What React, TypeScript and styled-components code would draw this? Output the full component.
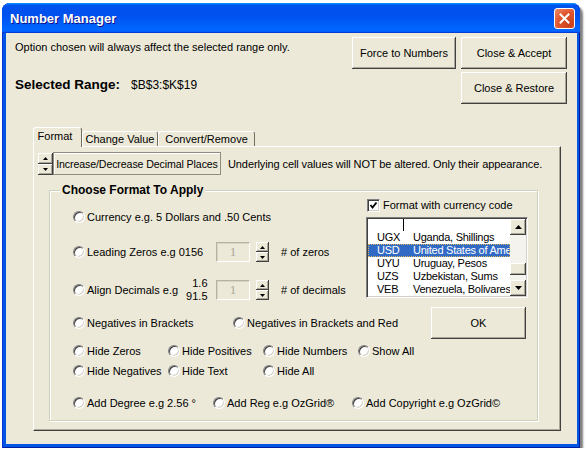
import React from 'react';
import styled, { createGlobalStyle, css } from 'styled-components';

const GlobalStyle = createGlobalStyle`
  html, body { margin: 0; padding: 0; background: #fff; }
  body {
    font-family: "Liberation Sans", Arial, sans-serif;
    font-size: 11px;
    color: #000;
  }
  * { box-sizing: border-box; }
`;

const raised = css`
  background: #ece9d8;
  box-shadow: inset -1px -1px #404040, inset 1px 1px #fff, inset -2px -2px #aca899;
`;

const sunken = css`
  border: 1px solid;
  border-color: #808080 #fff #fff #808080;
  box-shadow: inset 1px 1px #404040, inset -1px -1px #d4d0c8;
`;

const Window = styled.div`
  width: 578px;
  height: 445px;
  margin: 3px 0 0 2px;
  display: flex;
  flex-direction: column;
  background: #0055e5;
  border-radius: 8px 8px 0 0;
  box-shadow: 3px 3px 2px rgba(0, 0, 0, 0.5), inset 1px 0 #0831d9, inset -1px -1px #001ea0;
`;

const TitleBar = styled.div`
  height: 30px;
  flex: none;
  display: flex;
  align-items: center;
  padding: 0 5px 0 8px;
  border-radius: 8px 8px 0 0;
  background: linear-gradient(180deg, #0997ff, #0053ee 8%, #0050ee 40%, #06f 88%, #06f 93%, #005bff 95%, #003dd7 96%, #003dd7);
`;

const Title = styled.div`
  flex: 1;
  color: #fff;
  font-weight: bold;
  font-size: 13px;
  text-shadow: 1px 1px #0f1089;
`;

const CloseBtn = styled.div`
  width: 21px;
  height: 21px;
  border: 1px solid #fff;
  border-radius: 3px;
  display: flex;
  align-items: center;
  justify-content: center;
  background: radial-gradient(circle at 80% 80%, #c8401a, #e0552e 55%, #ef8d6c);
`;

const Body = styled.div`
  flex: 1;
  margin: 0 3px 4px 4px;
  background: #ece9d8;
  padding: 4px 10px 0 9px;
  display: flex;
  flex-direction: column;
`;

const TopGrid = styled.div`
  display: grid;
  grid-template-columns: 1fr 104px 106px;
  grid-template-rows: 32px 32px;
  column-gap: 5px;
  row-gap: 3px;
`;

const InfoCol = styled.div`
  grid-row: 1 / span 2;
  display: flex;
  flex-direction: column;
  padding-top: 3px;
`;

const InfoLine = styled.div`
  line-height: 14px;
  white-space: nowrap;
`;

const RangeLine = styled.div`
  margin-top: 23px;
  line-height: 16px;
  display: flex;
  align-items: baseline;
  white-space: nowrap;
`;

const RangeLabel = styled.span`
  font-weight: bold;
  font-size: 13.5px;
`;

const RangeValue = styled.span`
  font-size: 12px;
  margin-left: 11px;
`;

const Button = styled.div<{ $col?: number; $row?: number }>`
  ${raised};
  display: flex;
  align-items: center;
  justify-content: center;
  white-space: nowrap;
  grid-column: ${p => p.$col ?? 'auto'};
  grid-row: ${p => p.$row ?? 'auto'};
`;

const TabArea = styled.div`
  margin: 23px 0 0 18px;
  width: 528px;
  display: flex;
  flex-direction: column;
`;

const TabStrip = styled.div`
  display: flex;
  align-items: flex-end;
  height: 20px;
  margin-bottom: -1px;
  position: relative;
  z-index: 1;
`;

const Tab = styled.div<{ $active?: boolean; $w: number }>`
  width: ${p => p.$w}px;
  height: ${p => (p.$active ? 20 : 15)}px;
  margin-bottom: ${p => (p.$active ? 0 : 1)}px;
  background: #ece9d8;
  border: 1px solid;
  border-color: #fff #716f64 transparent #fff;
  border-bottom: none;
  border-radius: 3px 3px 0 0;
  display: flex;
  align-items: ${p => (p.$active ? 'flex-start' : 'center')};
  justify-content: center;
  padding: ${p => (p.$active ? '1px 5px 0 0' : '0')};
  white-space: nowrap;
  line-height: 14px;
`;

const Panel = styled.div`
  width: 528px;
  height: 285px;
  border: 1px solid;
  border-color: #fff #404040 #404040 #fff;
  box-shadow: inset -1px -1px #aca899;
  padding: 5px 4px 0 4px;
  display: flex;
  flex-direction: column;
`;

const Toolbar = styled.div`
  display: flex;
  align-items: center;
  height: 23px;
`;

const SpinBox = styled.div<{ $w: number; $h: number }>`
  width: ${p => p.$w}px;
  height: ${p => p.$h}px;
  display: flex;
  flex-direction: column;
  flex: none;
`;

const SpinHalf = styled.div`
  ${raised};
  flex: 1;
  display: flex;
  align-items: center;
  justify-content: center;
`;

const DecimalBtn = styled.div`
  width: 168px;
  height: 23px;
  border: 1px solid #8f8c7e;
  box-shadow: inset 1px 1px #fff;
  display: flex;
  align-items: center;
  justify-content: center;
  white-space: nowrap;
  font-size: 10.6px;
  letter-spacing: -0.1px;
`;

const Note = styled.div`
  margin-left: 7px;
  white-space: nowrap;
  letter-spacing: -0.1px;
`;

const GroupFrame = styled.div`
  position: relative;
  margin: 15px 0 0 11px;
  width: 489px;
  height: 231px;
  border: 1px solid #d0d0bf;
  box-shadow: inset 1px 1px #fff, 1px 1px #fff;
  padding: 7px 9px 0 23px;
  display: flex;
  flex-direction: column;
`;

const Caption = styled.div`
  position: absolute;
  top: -8px;
  left: 10px;
  padding: 0 2px;
  background: #ece9d8;
  font-weight: bold;
  font-size: 12px;
  line-height: 14px;
`;

const TopBlock = styled.div`
  display: grid;
  grid-template-columns: 293px 162px;
`;

const LeftRows = styled.div`
  display: flex;
  flex-direction: column;
  padding-top: 9px;
`;

const FieldRow = styled.div<{ $gap: number }>`
  display: flex;
  align-items: center;
  height: 20px;
  margin-top: ${p => p.$gap}px;
`;

const LabelCell = styled.div`
  width: 143px;
  display: flex;
  align-items: center;
  flex: none;
`;

const Option = styled.div<{ $w?: number }>`
  display: flex;
  align-items: center;
  gap: 2px;
  height: 16px;
  white-space: nowrap;
  width: ${p => (p.$w ? `${p.$w}px` : 'auto')};
  flex: none;
`;

const Radio = styled.span`
  width: 12px;
  height: 12px;
  border-radius: 50%;
  flex: none;
  background: #fff;
  ${sunken};
`;

const NumStack = styled.div`
  display: flex;
  flex-direction: column;
  align-items: flex-end;
  line-height: 13px;
  margin-left: 8px;
`;

const TextBox = styled.div`
  width: 34px;
  height: 20px;
  flex: none;
  border: 1px solid;
  border-color: #b5b2a4 #fff #fff #b5b2a4;
  box-shadow: inset 1px 1px #d8d5c6;
  display: flex;
  align-items: center;
  justify-content: center;
  color: #aca899;
  font-family: "Liberation Serif", "Times New Roman", serif;
  font-size: 13px;
  margin-right: 6px;
`;

const Unit = styled.div`
  margin-left: 12px;
  white-space: nowrap;
`;

const RightCol = styled.div`
  display: flex;
  flex-direction: column;
`;

const CheckRow = styled.div`
  display: flex;
  align-items: center;
  height: 14px;
  gap: 3px;
  padding-left: 1px;
  white-space: nowrap;
`;

const CheckBox = styled.span`
  width: 13px;
  height: 13px;
  background: #fff;
  display: flex;
  align-items: center;
  justify-content: center;
  ${sunken};
`;

const ListBox = styled.div`
  margin-top: 5px;
  width: 162px;
  height: 81px;
  display: flex;
  background: #fff;
  border: 1px solid;
  border-color: #808080 #fff #fff #808080;
  box-shadow: inset 1px 1px #404040, inset -1px -1px #d4d0c8;
  padding: 1px;
`;

const ListBody = styled.div`
  flex: 1;
  min-width: 0;
  overflow: hidden;
`;

const ListHeader = styled.div`
  height: 12px;
  display: flex;
`;

const HeadCell = styled.div`
  width: 36px;
  border-right: 1px solid #000;
`;

const ListRow = styled.div<{ $sel?: boolean }>`
  height: 13px;
  line-height: 13px;
  display: flex;
  white-space: nowrap;
  letter-spacing: -0.25px;
  background: ${p => (p.$sel ? '#316ac5' : 'transparent')};
  color: ${p => (p.$sel ? '#fff' : '#000')};
  outline: ${p => (p.$sel ? '1px dotted #d8b45c' : 'none')};
  outline-offset: -1px;
`;

const CodeCell = styled.span`
  width: 36px;
  padding-left: 9px;
  flex: none;
`;

const NameCell = styled.span`
  padding-left: 9px;
`;

const ScrollBar = styled.div`
  width: 16px;
  flex: none;
  display: flex;
  flex-direction: column;
`;

const ScrollBtn = styled.div<{ $h: number }>`
  ${raised};
  height: ${p => p.$h}px;
  flex: none;
  display: flex;
  align-items: center;
  justify-content: center;
`;

const Track = styled.div`
  flex: 1;
  background: #f4f3ee;
  display: flex;
  flex-direction: column;
  padding-top: 28px;
`;

const Thumb = styled.div`
  ${raised};
  height: 12px;
`;

const NegRow = styled.div`
  display: flex;
  align-items: center;
  height: 32px;
  margin-top: 7px;
`;

const OkButton = styled(Button)`
  width: 95px;
  height: 32px;
  margin-left: auto;
  margin-right: 2px;
`;

const HideGrid = styled.div`
  display: grid;
  grid-template-columns: 95px 95px 95px auto;
  grid-auto-rows: 16px;
  row-gap: 4px;
  margin-top: 4px;
`;

const AddRow = styled.div`
  display: flex;
  margin-top: 16px;
`;

const Arrow = ({ up, w = 5 }: { up?: boolean; w?: number }) => {
  const h = Math.ceil(w / 2);
  const pts = up ? `0,${h} ${w},${h} ${w / 2},0` : `0,0 ${w},0 ${w / 2},${h}`;
  return (
    <svg width={w} height={h} viewBox={`0 0 ${w} ${h}`}>
      <polygon points={pts} fill="#000" />
    </svg>
  );
};

const Spin = ({ w, h }: { w: number; h: number }) => (
  <SpinBox $w={w} $h={h}>
    <SpinHalf><Arrow up w={5} /></SpinHalf>
    <SpinHalf><Arrow w={5} /></SpinHalf>
  </SpinBox>
);

const Opt = ({ label, w }: { label: React.ReactNode; w?: number }) => (
  <Option $w={w}>
    <Radio />
    <span>{label}</span>
  </Option>
);

const currencies = [
  ['UGX', 'Uganda, Shillings'],
  ['USD', 'United States of America, Dollars'],
  ['UYU', 'Uruguay, Pesos'],
  ['UZS', 'Uzbekistan, Sums'],
  ['VEB', 'Venezuela, Bolivares'],
];

export default function App() {
  return (
    <>
      <GlobalStyle />
      <Window>
        <TitleBar>
          <Title>Number Manager</Title>
          <CloseBtn>
            <svg width="11" height="11" viewBox="0 0 11 11">
              <path d="M1.5 1.5 L9.5 9.5 M9.5 1.5 L1.5 9.5" stroke="#fff" strokeWidth="2" strokeLinecap="square" />
            </svg>
          </CloseBtn>
        </TitleBar>
        <Body>
          <TopGrid>
            <InfoCol>
              <InfoLine>Option chosen will always affect the selected range only.</InfoLine>
              <RangeLine>
                <RangeLabel>Selected Range:</RangeLabel>
                <RangeValue>$B$3:$K$19</RangeValue>
              </RangeLine>
            </InfoCol>
            <Button $col={2} $row={1}>Force to Numbers</Button>
            <Button $col={3} $row={1}>Close &amp; Accept</Button>
            <Button $col={3} $row={2}>Close &amp; Restore</Button>
          </TopGrid>

          <TabArea>
            <TabStrip>
              <Tab $active $w={49}>Format</Tab>
              <Tab $w={76}>Change Value</Tab>
              <Tab $w={97}>Convert/Remove</Tab>
            </TabStrip>
            <Panel>
              <Toolbar>
                <Spin w={15} h={22} />
                <DecimalBtn>Increase/Decrease Decimal Places</DecimalBtn>
                <Note>Underlying cell values will NOT be altered. Only their appearance.</Note>
              </Toolbar>

              <GroupFrame>
                <Caption>Choose Format To Apply</Caption>
                <TopBlock>
                  <LeftRows>
                    <FieldRow $gap={0}>
                      <Opt label="Currency e.g. 5 Dollars and .50 Cents" />
                    </FieldRow>
                    <FieldRow $gap={15}>
                      <LabelCell>
                        <Opt label="Leading Zeros e.g 0156" />
                      </LabelCell>
                      <TextBox>1</TextBox>
                      <Spin w={13} h={20} />
                      <Unit># of zeros</Unit>
                    </FieldRow>
                    <FieldRow $gap={18}>
                      <LabelCell>
                        <Opt label="Align Decimals e.g" />
                        <NumStack>
                          <span>1.6</span>
                          <span>91.5</span>
                        </NumStack>
                      </LabelCell>
                      <TextBox>1</TextBox>
                      <Spin w={13} h={20} />
                      <Unit># of decimals</Unit>
                    </FieldRow>
                  </LeftRows>

                  <RightCol>
                    <CheckRow>
                      <CheckBox>
                        <svg width="9" height="9" viewBox="0 0 9 9">
                          <path d="M1.5 4 L3.5 6.5 L7.5 1.5" stroke="#000" strokeWidth="1.8" fill="none" />
                        </svg>
                      </CheckBox>
                      <span>Format with currency code</span>
                    </CheckRow>
                    <ListBox>
                      <ListBody>
                        <ListHeader><HeadCell /></ListHeader>
                        {currencies.map(([code, name]) => (
                          <ListRow key={code} $sel={code === 'USD'}>
                            <CodeCell>{code}</CodeCell>
                            <NameCell>{name}</NameCell>
                          </ListRow>
                        ))}
                      </ListBody>
                      <ScrollBar>
                        <ScrollBtn $h={16}><Arrow up w={7} /></ScrollBtn>
                        <Track><Thumb /></Track>
                        <ScrollBtn $h={16}><Arrow w={7} /></ScrollBtn>
                      </ScrollBar>
                    </ListBox>
                  </RightCol>
                </TopBlock>

                <NegRow>
                  <Opt label="Negatives in Brackets" w={160} />
                  <Opt label="Negatives in Brackets and Red" />
                  <OkButton>OK</OkButton>
                </NegRow>

                <HideGrid>
                  <Opt label="Hide Zeros" />
                  <Opt label="Hide Positives" />
                  <Opt label="Hide Numbers" />
                  <Opt label="Show All" />
                  <Opt label="Hide Negatives" />
                  <Opt label="Hide Text" />
                  <Opt label="Hide All" />
                </HideGrid>

                <AddRow>
                  <Opt label="Add Degree e.g 2.56 °" w={140} />
                  <Opt label="Add Reg e.g OzGrid®" w={139} />
                  <Opt label="Add Copyright e.g OzGrid©" />
                </AddRow>
              </GroupFrame>
            </Panel>
          </TabArea>
        </Body>
      </Window>
    </>
  );
}
